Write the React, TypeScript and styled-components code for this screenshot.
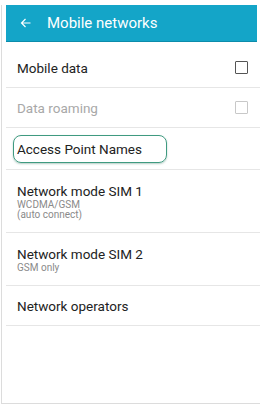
import React from 'react';
import styled, { createGlobalStyle } from 'styled-components';

const GlobalStyle = createGlobalStyle`
  html, body {
    margin: 0;
    padding: 0;
    background: #fff;
  }
  body {
    font-family: Roboto, 'Noto Sans', sans-serif;
  }
`;

const Frame = styled.div`
  width: 260px;
  height: 405px;
  box-sizing: border-box;
  padding: 5px 0 0 1px;
  background: #fff;
`;

const Phone = styled.div`
  height: 398px;
  border-left: 1px solid #dcdcdc;
  border-bottom: 1px solid #dcdcdc;
  padding-left: 4px;
  display: flex;
  flex-direction: column;
`;

const Header = styled.header`
  height: 37px;
  width: 251px;
  background: #14a5c8;
  border-bottom: 1px solid #0c8cab;
  box-sizing: border-box;
  display: flex;
  align-items: center;
  gap: 15px;
  padding-left: 14px;
  color: #fff;

  h1 {
    margin: 0;
    font-size: 15px;
    font-weight: 400;
  }
`;

const List = styled.div`
  display: flex;
  flex-direction: column;
`;

const Row = styled.div<{ $height: number; $top?: number; $disabled?: boolean }>`
  height: ${p => p.$height}px;
  box-sizing: border-box;
  border-bottom: 1px solid #e6e6e6;
  padding: ${p => p.$top ?? 0}px 12px 0 11px;
  display: flex;
  align-items: center;
  justify-content: space-between;
  color: ${p => (p.$disabled ? '#a8a8a8' : '#222')};
`;

const Texts = styled.div`
  display: flex;
  flex-direction: column;
`;

const Title = styled.div<{ $highlight?: boolean }>`
  font-size: 13.5px;
  line-height: 18px;
  ${p =>
    p.$highlight &&
    `
    margin-left: -4px;
    padding: 4px 24px 4px 3px;
    border: 1.5px solid #3f9a80;
    border-radius: 8px;
    box-shadow: 0 1px 2px rgba(40, 110, 90, 0.35);
  `}
`;

const Sub = styled.div`
  font-size: 10px;
  line-height: 10.5px;
  color: #8a8a8a;
`;

const Check = styled.div<{ $disabled?: boolean }>`
  width: 11px;
  height: 11px;
  border: 1.5px solid ${p => (p.$disabled ? '#c8c8c8' : '#555')};
  border-radius: 1px;
`;

const BackArrow = () => (
  <svg width="12" height="12" viewBox="0 0 24 24" fill="none" stroke="#fff" strokeWidth="2.4">
    <path d="M21 12H4M11 4l-8 8 8 8" />
  </svg>
);

export default function App() {
  return (
    <Frame>
      <GlobalStyle />
      <Phone>
        <Header>
          <BackArrow />
          <h1>Mobile networks</h1>
        </Header>
        <List>
          <Row $height={46} $top={6}>
            <Title>Mobile data</Title>
            <Check />
          </Row>
          <Row $height={40} $disabled>
            <Title>Data roaming</Title>
            <Check $disabled />
          </Row>
          <Row $height={42}>
            <Title $highlight>Access Point Names</Title>
          </Row>
          <Row $height={63}>
            <Texts>
              <Title>Network mode SIM 1</Title>
              <Sub>WCDMA/GSM</Sub>
              <Sub>(auto connect)</Sub>
            </Texts>
          </Row>
          <Row $height={53}>
            <Texts>
              <Title>Network mode SIM 2</Title>
              <Sub>GSM only</Sub>
            </Texts>
          </Row>
          <Row $height={40}>
            <Title>Network operators</Title>
          </Row>
        </List>
      </Phone>
    </Frame>
  );
}
